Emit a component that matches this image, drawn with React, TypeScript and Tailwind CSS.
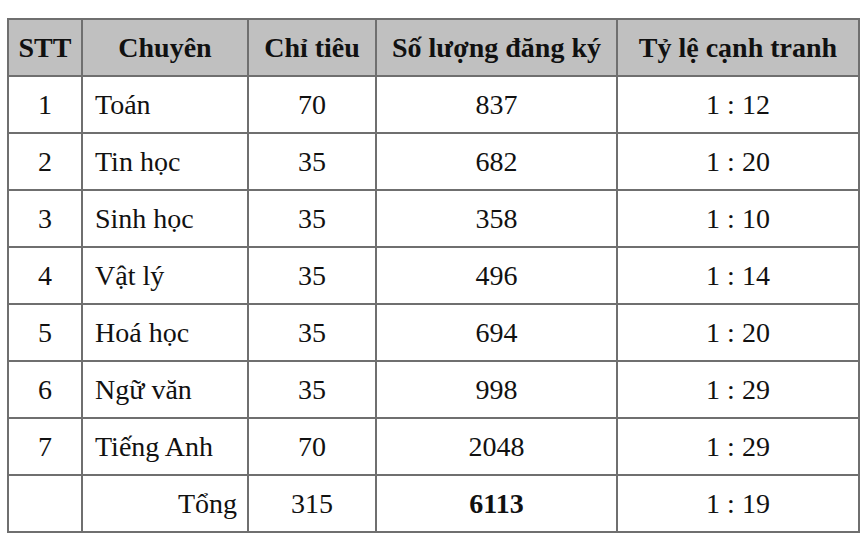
import React from "react";

const rows: [string, string, string, string, string][] = [
  ["1", "Toán", "70", "837", "1 : 12"],
  ["2", "Tin học", "35", "682", "1 : 20"],
  ["3", "Sinh học", "35", "358", "1 : 10"],
  ["4", "Vật lý", "35", "496", "1 : 14"],
  ["5", "Hoá học", "35", "694", "1 : 20"],
  ["6", "Ngữ văn", "35", "998", "1 : 29"],
  ["7", "Tiếng Anh", "70", "2048", "1 : 29"],
];

const td = "border-2 border-[#6f6f6f] h-[57px] p-0 align-middle";

export default function App() {
  return (
    <div className="w-[867px] h-[545px] bg-white pt-[18px] pl-[7px] text-[#111] text-[28px] leading-none font-['Liberation_Serif','Times_New_Roman',serif]">
      <table className="border-collapse table-fixed w-[851px]">
        <colgroup>
          <col className="w-[74px]" />
          <col className="w-[166px]" />
          <col className="w-[128px]" />
          <col className="w-[241px]" />
          <col className="w-[242px]" />
        </colgroup>
        <thead>
          <tr className="bg-[#c0c0c0] font-bold">
            <th className={`${td} text-center`}>STT</th>
            <th className={`${td} text-center`}>Chuyên</th>
            <th className={`${td} text-center`}>Chỉ tiêu</th>
            <th className={`${td} text-center`}>Số lượng đăng ký</th>
            <th className={`${td} text-center`}>Tỷ lệ cạnh tranh</th>
          </tr>
        </thead>
        <tbody>
          {rows.map((r) => (
            <tr key={r[0]}>
              <td className={`${td} text-center`}>{r[0]}</td>
              <td className={`${td} text-left pl-[12px]`}>{r[1]}</td>
              <td className={`${td} text-center`}>{r[2]}</td>
              <td className={`${td} text-center`}>{r[3]}</td>
              <td className={`${td} text-center`}>{r[4]}</td>
            </tr>
          ))}
          <tr>
            <td className={td}></td>
            <td className={`${td} text-right pr-[10px]`}>Tổng</td>
            <td className={`${td} text-center`}>315</td>
            <td className={`${td} text-center font-bold`}>6113</td>
            <td className={`${td} text-center`}>1 : 19</td>
          </tr>
        </tbody>
      </table>
    </div>
  );
}
